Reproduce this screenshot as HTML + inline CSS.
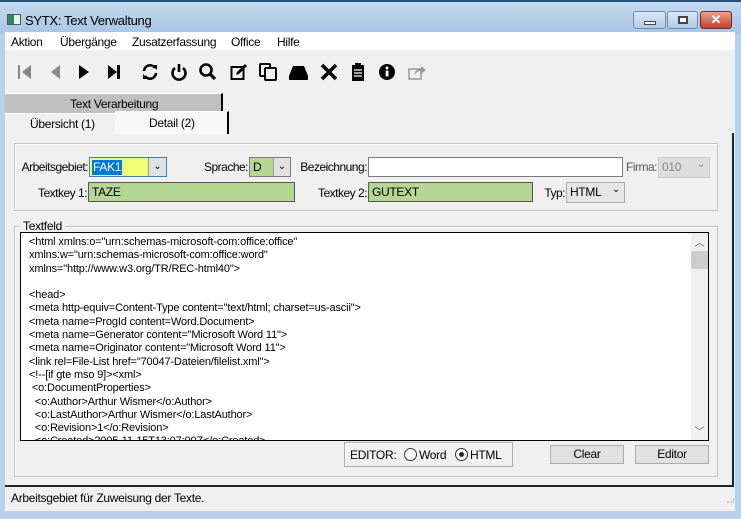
<!DOCTYPE html>
<html><head><meta charset="utf-8"><style>
*{box-sizing:border-box;margin:0;padding:0}
body{width:741px;height:519px;overflow:hidden;background:#b9d1ea;font-family:"Liberation Sans",sans-serif;font-size:12px;color:#000;position:relative}
.a{position:absolute}
.lbl{position:absolute;font-size:12px;letter-spacing:-0.3px;white-space:nowrap}
.r{position:absolute;font-size:12px;letter-spacing:-0.5px;white-space:nowrap;text-align:right}
.in{position:absolute;border:1px solid #7a7a7a;height:20px;font-size:12px;padding:2px 3px;letter-spacing:-0.3px;white-space:nowrap}
.btn{position:absolute;background:#e1e1e1;border:1px solid #adadad;text-align:center;font-size:12px;line-height:17px;letter-spacing:-0.3px}
.tb svg{position:absolute;top:62px}
</style></head><body>
<div class="a" style="left:0;top:0;width:741px;height:34px;background:linear-gradient(#c6daee,#a8c5e5)"></div>
<div class="a" style="left:0;top:0;width:741px;height:2px;background:#2b4f7a"></div>
<div class="a" style="left:7px;top:14px;width:14px;height:11px;border:1px solid #555;background:linear-gradient(90deg,#2a8a5a 50%,#eee 50%)"></div>
<div class="lbl" style="left:25px;top:13px;font-size:13px">SYTX: Text Verwaltung</div>
<div class="a" style="left:633px;top:11px;width:33px;height:18px;border:1px solid #6e8cb0;border-radius:3px;background:linear-gradient(#dce8f5,#b0c9e4)"><div class="a" style="left:10px;top:9px;width:12px;height:4px;background:#fff;border:1px solid #444"></div></div>
<div class="a" style="left:667px;top:11px;width:31px;height:18px;border:1px solid #6e8cb0;border-radius:3px;background:linear-gradient(#dce8f5,#b0c9e4)"><div class="a" style="left:10px;top:4px;width:10px;height:8px;background:#fff;border:2px solid #444"></div></div>
<div class="a" style="left:700px;top:11px;width:32px;height:18px;border:1px solid #7a2a20;border-radius:3px;background:linear-gradient(#e8a090,#c4402c);color:#fff;font-weight:bold;text-align:center;line-height:16px;font-size:13px">✕</div>
<div class="a" style="left:5px;top:32px;width:730px;height:479px;background:#f0f0f0"></div>
<div class="a" style="left:5px;top:32px;width:730px;height:18px;background:#fff"></div>
<div class="lbl" style="left:11px;top:35px">Aktion</div>
<div class="lbl" style="left:60px;top:35px">Übergänge</div>
<div class="lbl" style="left:132px;top:35px">Zusatzerfassung</div>
<div class="lbl" style="left:231px;top:35px">Office</div>
<div class="lbl" style="left:277px;top:35px">Hilfe</div>
<div class="tb">
<svg style="left:16px" width="18" height="20"><rect x="2" y="3" width="2" height="14" fill="#888"/><path d="M15 3 L6 10 L15 17Z" fill="#888"/></svg>
<svg style="left:46px" width="18" height="20"><path d="M14 3 L5 10 L14 17Z" fill="#888"/></svg>
<svg style="left:75px" width="18" height="20"><path d="M4 3 L14 10 L4 17Z" fill="#000"/></svg>
<svg style="left:105px" width="18" height="20"><path d="M3 3 L12 10 L3 17Z" fill="#000"/><rect x="12" y="3" width="3" height="14"/></svg>
<svg style="left:140px" width="20" height="20"><path d="M4 9 A6 6 0 0 1 15 6 M16 11 A6 6 0 0 1 5 14" stroke="#000" stroke-width="2.6" fill="none"/><path d="M12 3 L17 3 L17 8Z M8 17 L3 17 L3 12Z"/></svg>
<svg style="left:169px" width="20" height="20"><path d="M6 6 A6.5 6.5 0 1 0 14 6" stroke="#000" stroke-width="2.6" fill="none"/><rect x="8.7" y="2" width="2.6" height="8"/></svg>
<svg style="left:198px" width="20" height="20"><circle cx="8" cy="8" r="5.5" stroke="#000" stroke-width="2.6" fill="none"/><path d="M12 12 L17 17" stroke="#000" stroke-width="3.2"/></svg>
<svg style="left:229px" width="20" height="20"><rect x="2.5" y="5" width="12" height="12" stroke="#000" stroke-width="2" fill="none"/><path d="M7 13 L8 10 L16 2 L18 4 L10 12Z"/></svg>
<svg style="left:258px" width="20" height="20"><rect x="2" y="2" width="10" height="12" rx="1" stroke="#000" stroke-width="2" fill="none"/><rect x="7" y="6" width="11" height="12" rx="1" stroke="#000" stroke-width="2" fill="#f0f0f0"/></svg>
<svg style="left:288px" width="22" height="20"><path d="M5 4 L16 4 L20 14 L1 14Z"/><rect x="1" y="14" width="19" height="4"/></svg>
<svg style="left:319px" width="20" height="20"><path d="M3 3 L17 17 M17 3 L3 17" stroke="#000" stroke-width="3.5"/></svg>
<svg style="left:348px" width="20" height="20"><rect x="4" y="3" width="12" height="16" fill="#000"/><rect x="7" y="1" width="6" height="4" fill="#000"/><path d="M6 8h8M6 11h8M6 14h8" stroke="#fff" stroke-width="1.3"/></svg>
<svg style="left:377px" width="20" height="20"><circle cx="10" cy="10" r="8"/><rect x="8.7" y="8.5" width="2.8" height="6" fill="#fff"/><circle cx="10" cy="6" r="1.5" fill="#fff"/></svg>
<svg style="left:407px" width="20" height="20"><rect x="2" y="7" width="12" height="10" stroke="#999" stroke-width="1.5" fill="none"/><path d="M7 13 Q8 7 14 7 L14 4 L19 8 L14 12 L14 9 Q10 9 7 13Z" fill="#999"/></svg>
</div>
<div class="a" style="left:5px;top:93px;width:218px;height:20px;background:#c0c0c0;border-right:2px solid #000;border-top:1px solid #fff"></div>
<div class="lbl" style="left:70px;top:97px">Text Verarbeitung</div>
<div class="a" style="left:5px;top:113px;width:111px;height:20px;border-top:1px solid #fff;border-right:1px solid #ccc;background:#f0f0f0"></div>
<div class="lbl" style="left:30px;top:117px">Übersicht (1)</div>
<div class="a" style="left:115px;top:111px;width:114px;height:23px;background:#f8f8f8;border-top:1px solid #fff;border-right:2px solid #000"></div>
<div class="lbl" style="left:149px;top:116px">Detail (2)</div>
<div class="a" style="left:5px;top:133px;width:729px;height:354px;border-right:2px solid #222;border-bottom:2px solid #222"></div>
<div class="a" style="left:14px;top:143px;width:704px;height:68px;border:1px solid #c4c4c4;box-shadow:inset 1px 1px #fff"></div>
<div class="r" style="right:653px;top:160px">Arbeitsgebiet:</div>
<div class="in" style="left:89px;top:157px;width:78px;background:#eeff77;padding:0;border:1px solid #3c7fb1"><span style="background:#0078d7;color:#fff;display:inline-block;margin:2px 0 0 2px;padding:0 1px;line-height:15px">FAK1</span></div>
<div class="a" style="left:148px;top:158px;width:18px;height:18px;background:#e1e1e1;border-left:1px solid #999;text-align:center;font-size:10px;line-height:18px">⌄</div>
<div class="r" style="right:493px;top:160px">Sprache:</div>
<div class="in" style="left:249px;top:157px;width:42px;background:#b5d793">D</div>
<div class="a" style="left:273px;top:158px;width:17px;height:18px;background:#e1e1e1;border-left:1px solid #999;text-align:center;font-size:10px;line-height:18px">⌄</div>
<div class="r" style="right:374px;top:160px">Bezeichnung:</div>
<div class="in" style="left:368px;top:157px;width:255px;background:#fff"></div>
<div class="r" style="right:84px;top:160px;color:#555">Firma:</div>
<div class="in" style="left:658px;top:157px;width:52px;height:21px;background:#ddd;border-color:#ccc;color:#888">010<span style="position:absolute;right:4px;top:1px;font-size:10px">⌄</span></div>
<div class="r" style="right:654px;top:186px">Textkey 1:</div>
<div class="in" style="left:88px;top:182px;width:207px;background:#b5d793;border:1px solid #555">TAZE</div>
<div class="r" style="right:374px;top:186px">Textkey 2:</div>
<div class="in" style="left:368px;top:182px;width:165px;background:#b5d793;border:1px solid #555">GUTEXT</div>
<div class="r" style="right:176px;top:186px">Typ:</div>
<div class="in" style="left:566px;top:182px;width:59px;height:21px;background:#e5e5e5;border-color:#adadad">HTML<span style="position:absolute;right:4px;top:1px;font-size:10px">⌄</span></div>
<div class="a" style="left:14px;top:226px;width:704px;height:251px;border:1px solid #c4c4c4;box-shadow:inset 1px 1px #fff"></div>
<div class="lbl" style="left:20px;top:219px;background:#f0f0f0;padding:0 3px">Textfeld</div>
<div class="a" style="left:20px;top:232px;width:689px;height:209px;background:#fff;border:1px solid #000;overflow:hidden">
<div style="position:absolute;left:8px;top:3px;font-size:11px;line-height:13.3px;letter-spacing:-0.15px;white-space:pre">&lt;html xmlns:o="urn:schemas-microsoft-com:office:office"
xmlns:w="urn:schemas-microsoft-com:office:word"
xmlns="http://www.w3.org/TR/REC-html40"&gt;

&lt;head&gt;
&lt;meta http-equiv=Content-Type content="text/html; charset=us-ascii"&gt;
&lt;meta name=ProgId content=Word.Document&gt;
&lt;meta name=Generator content="Microsoft Word 11"&gt;
&lt;meta name=Originator content="Microsoft Word 11"&gt;
&lt;link rel=File-List href="70047-Dateien/filelist.xml"&gt;
&lt;!--[if gte mso 9]&gt;&lt;xml&gt;
 &lt;o:DocumentProperties&gt;
  &lt;o:Author&gt;Arthur Wismer&lt;/o:Author&gt;
  &lt;o:LastAuthor&gt;Arthur Wismer&lt;/o:LastAuthor&gt;
  &lt;o:Revision&gt;1&lt;/o:Revision&gt;
  &lt;o:Created&gt;2005-11-15T13:07:00Z&lt;/o:Created&gt;</div>
<div class="a" style="left:670px;top:0;width:17px;height:207px;background:#f0f0f0"></div>
<div class="a" style="left:670px;top:18px;width:17px;height:18px;background:#cdcdcd"></div>
<div class="a" style="left:670px;top:1px;width:17px;text-align:center;font-size:10px;color:#555">︿</div>
<div class="a" style="left:670px;top:190px;width:17px;text-align:center;font-size:10px;color:#555">﹀</div>
</div>
<div class="a" style="left:344px;top:442px;width:169px;height:25px;border:1px solid #aaa;box-shadow:inset 1px 1px #fff"></div>
<div class="lbl" style="left:350px;top:448px">EDITOR:</div>
<div class="a" style="left:404px;top:448px;width:13px;height:13px;border:1px solid #333;border-radius:50%;background:#fff"></div>
<div class="lbl" style="left:419px;top:448px">Word</div>
<div class="a" style="left:455px;top:448px;width:13px;height:13px;border:1px solid #333;border-radius:50%;background:#fff"><div class="a" style="left:3px;top:3px;width:5px;height:5px;border-radius:50%;background:#222"></div></div>
<div class="lbl" style="left:470px;top:448px">HTML</div>
<div class="btn" style="left:550px;top:445px;width:74px;height:19px">Clear</div>
<div class="btn" style="left:635px;top:445px;width:74px;height:19px">Editor</div>
<div class="lbl" style="left:11px;top:491px">Arbeitsgebiet für Zuweisung der Texte.</div>
<div class="lbl" style="left:724px;top:496px;font-size:8px;color:#999">⠠⠴</div>
</body></html>
